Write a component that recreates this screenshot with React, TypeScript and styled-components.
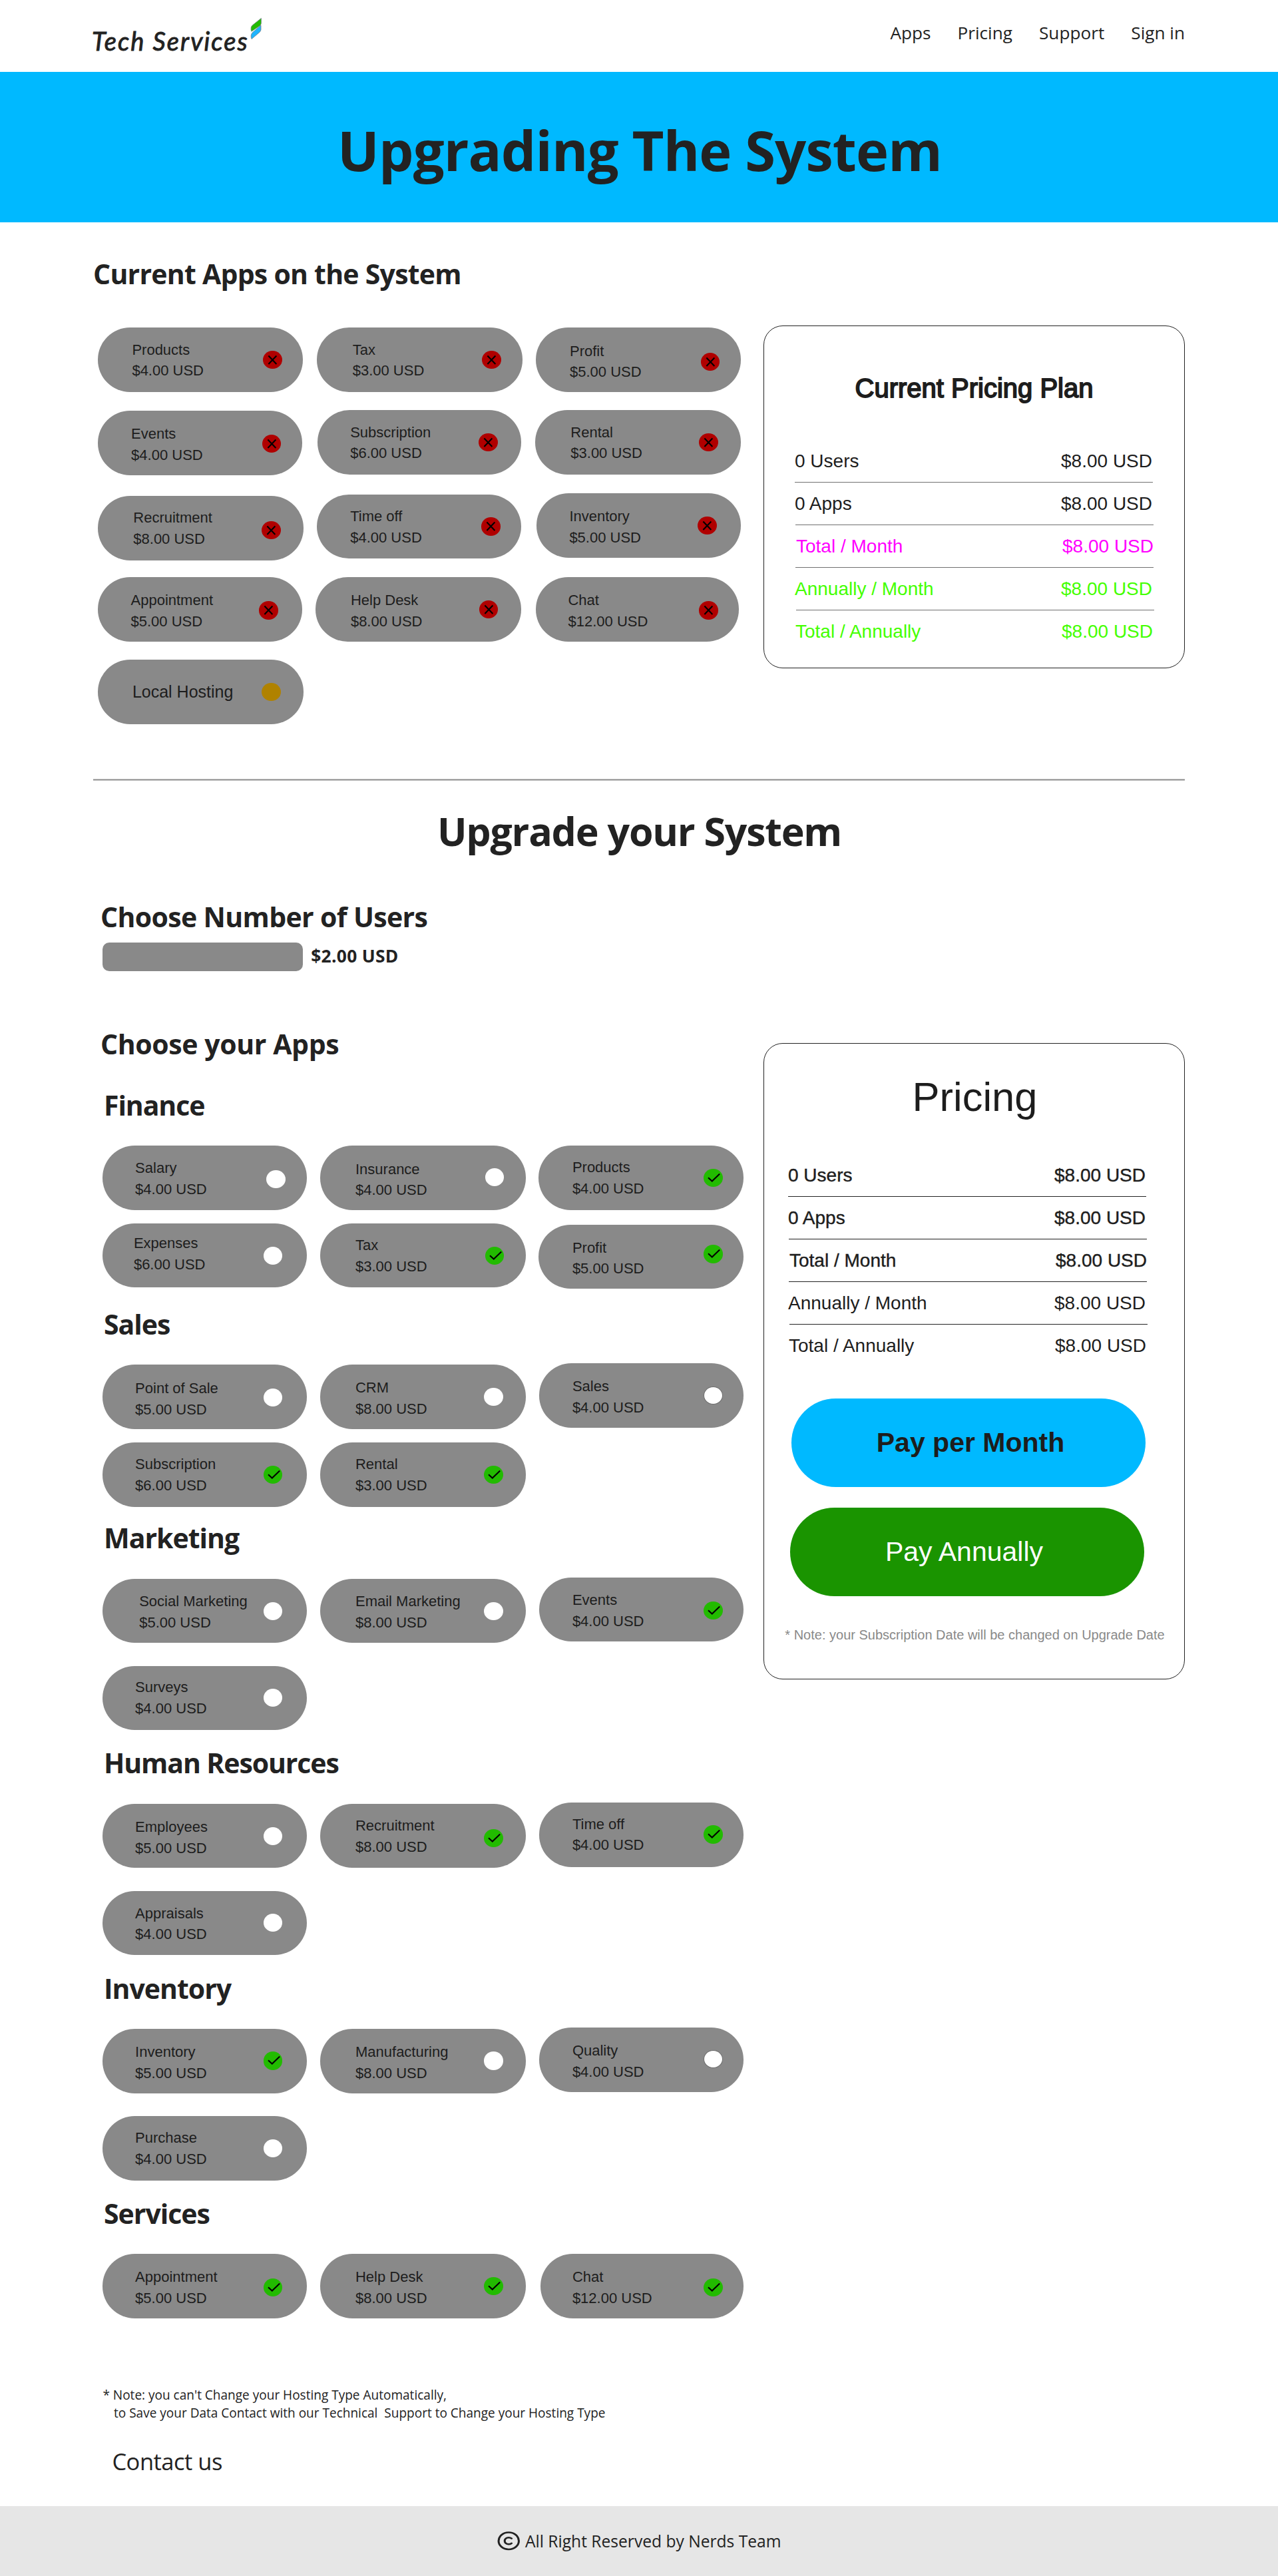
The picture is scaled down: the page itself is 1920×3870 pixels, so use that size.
import React from "react";
import styled, { createGlobalStyle } from "styled-components";
import { Copyright } from "lucide-react";

const UI = `"Open Sans", "Noto Sans", sans-serif`;
const ARIAL = `"Liberation Sans", Arial, sans-serif`;
const INK = "#222222";

const GlobalStyle = createGlobalStyle`
  *, *::before, *::after { box-sizing: border-box; }
  body { margin: 0; background: #ffffff; color: ${INK}; font-family: ${UI}; }
  h1, h2, h3, p { margin: 0; }
`;

const Page = styled.div`
  width: 1920px;
  min-height: 3870px;
  display: flex;
  flex-direction: column;
`;

/* ---------- header ---------- */

const Header = styled.header`
  height: 108px;
  padding: 0 140px 0 138px;
  display: flex;
  justify-content: space-between;
  align-items: flex-start;
`;

const Logo = styled.a`
  display: flex;
  align-items: flex-start;
  color: ${INK};
`;

const LogoText = styled.span`
  margin-top: 39px;
  font: italic 400 38px/44px Lato, sans-serif;
  letter-spacing: 2.1px;
  -webkit-text-stroke: 0.9px ${INK};
`;

const Leaf = styled.svg`
  width: 18px;
  height: 34px;
  margin: 26px 0 0 2px;
`;

const Nav = styled.nav`
  display: flex;
  gap: 40px;
  margin-top: 29px;
  font-size: 26.2px;
  line-height: 40px;
`;

const Banner = styled.section`
  height: 226px;
  padding: 7px 0 0 2px;
  display: flex;
  justify-content: center;
  align-items: center;
  background: #00b9ff;
`;

const BannerTitle = styled.h1`
  font-size: 83px;
  line-height: 110px;
  letter-spacing: -0.85px;
`;

/* ---------- headings and layout ---------- */

const Main = styled.main`
  flex: 1;
  padding: 49px 140px 0;
`;

const Heading = styled.h2<{ $track: number }>`
  font-size: 41px;
  line-height: 56px;
  letter-spacing: ${(p) => p.$track}px;
  white-space: nowrap;
`;

const Columns = styled.div`
  display: flex;
  align-items: flex-start;
  justify-content: space-between;
`;

const CurrentColumns = styled(Columns)`
  margin-top: 50px;
`;

const CurrentApps = styled.div`
  padding: 3px 0 0 7px;
`;

const Divider = styled.div`
  height: 3px;
  margin-top: 82px;
  background: #8a8a8a;
  border: solid #c4c4c4;
  border-width: 1px 0;
`;

const UpgradeTitle = styled.h2`
  margin-top: 37px;
  padding-left: 1px;
  text-align: center;
  font-size: 59px;
  line-height: 76px;
  letter-spacing: -1.2px;
`;

const Users = styled.section`
  margin-top: 63px;
  padding-left: 11px;
`;

const UsersField = styled.div`
  display: flex;
  gap: 12px;
  margin: 11px 0 0 2.7px;
`;

const UsersInput = styled.div`
  width: 301.5px;
  height: 43px;
  border-radius: 10px;
  background: #898989;
`;

const UsersPrice = styled.span`
  font-size: 26.4px;
  font-weight: 700;
  line-height: 40px;
  letter-spacing: 0.3px;
`;

const UpgradeColumns = styled(Columns)`
  margin-top: 81px;
`;

const Chooser = styled.section`
  padding-left: 11px;
`;

const Category = styled.section<{ $top: number }>`
  margin-top: ${(p) => p.$top + 0.8}px;
  padding-left: 3px;

  > h2 {
    margin: 0 0 33.4px 2px;
  }
`;

/* ---------- app pills ---------- */

const PillGrid = styled.div<{ $columns: string; $pitch: number }>`
  display: grid;
  grid-template-columns: ${(p) => p.$columns};
  grid-auto-rows: 96.6px;
  row-gap: ${(p) => p.$pitch - 96.6}px;
`;

const PillBox = styled.div<{ $dx: number; $dy: number; $width: number }>`
  display: flex;
  align-items: flex-start;
  width: ${(p) => p.$width}px;
  height: 96.6px;
  margin: ${(p) => p.$dy}px 0 0 ${(p) => p.$dx}px;
  border-radius: 48.3px;
  background: #898989;
  color: #1d1d1d;
  font-family: ${ARIAL};
`;

const PillText = styled.div<{ $left: number; $top: number; $span: number }>`
  flex: none;
  width: ${(p) => p.$span}px;
  padding: ${(p) => p.$top}px 0 0 ${(p) => p.$left}px;
  font-size: 22px;
  line-height: 31.8px;
  white-space: nowrap;
`;

const HostingText = styled(PillText)`
  font-size: 25px;
`;

type Status = "remove" | "on" | "off" | "outlined" | "hosting";

const DOT_FILL: Record<Status, string> = {
  remove: "#b00000",
  on: "#22bb00",
  off: "#ffffff",
  outlined: "#ffffff",
  hosting: "#b08200",
};

const Dot = styled.span<{ $status: Status; $top: number }>`
  flex: none;
  display: flex;
  width: 28.8px;
  height: 27.4px;
  margin-top: ${(p) => p.$top}px;
  border-radius: 50%;
  border: ${(p) => (p.$status === "outlined" ? "1px solid #6c6c6c" : "none")};
  background: ${(p) => DOT_FILL[p.$status]};
`;

const Mark = styled.svg`
  width: 28.8px;
  height: 27.4px;
  fill: none;
  stroke: #000000;
  stroke-width: 2.1;
`;

interface AppItem {
  name: string;
  price?: string;
  status: Status;
  /** left edge of the label inside the pill */
  x: number;
  /** baseline of the name inside the pill */
  base: number;
  /** left edge and vertical centre of the status dot */
  dotX: number;
  dotY: number;
  width: number;
  dx?: number;
  dy?: number;
}

const app = (
  name: string,
  price: number,
  status: Status,
  x: number,
  base: number,
  dotX: number,
  dotY: number,
  width: number,
  dx = 0,
  dy = 0
): AppItem => ({
  name,
  price: `$${price.toFixed(2)} USD`,
  status,
  x,
  base,
  dotX,
  dotY,
  width,
  dx,
  dy,
});

function Pill({ item }: { item: AppItem }) {
  const Text = item.price ? PillText : HostingText;
  const ascent = item.price ? 22.9 : 24.4;
  return (
    <PillBox $dx={item.dx ?? 0} $dy={item.dy ?? 0} $width={item.width}>
      <Text $left={item.x + 0.5} $top={item.base - ascent} $span={item.dotX}>
        <div>{item.name}</div>
        {item.price && <div>{item.price}</div>}
      </Text>
      <Dot $status={item.status} $top={item.dotY - 13.7}>
        {item.status === "remove" && (
          <Mark viewBox="0 0 28.8 27.4">
            <path d="M8.4 7.6 20.4 20M20.4 7.6 8.4 20" />
          </Mark>
        )}
        {item.status === "on" && (
          <Mark viewBox="0 0 28.8 27.4">
            <path d="M7 13.2 12.8 18.6 24.2 7.6" />
          </Mark>
        )}
      </Dot>
    </PillBox>
  );
}

const CURRENT: AppItem[] = [
  app("Products", 4, "remove", 50.9, 40.4, 248, 48.4, 308),
  app("Tax", 3, "remove", 53, 40.4, 248, 48.4, 308.5),
  app("Profit", 5, "remove", 50.8, 42.5, 248, 51.3, 308.5),
  app("Events", 4, "remove", 49.6, 42, 246.7, 49.4, 307, 0, 0.4),
  app("Subscription", 6, "remove", 48.9, 40.4, 242.2, 48.4, 306.7, 0.6, -0.6),
  app("Rental", 3, "remove", 52.8, 40.4, 246.1, 48.4, 309.2, -0.7, -0.6),
  app("Recruitment", 8, "remove", 52.8, 39.9, 246, 51.3, 309.2, 0, 3.4),
  app("Time off", 4, "remove", 49.5, 40.4, 246.7, 48.4, 306.6, 0, 1.2),
  app("Inventory", 5, "remove", 48.9, 42.1, 242.2, 48.2, 307, 1.3, -0.5),
  app("Appointment", 5, "remove", 49, 42, 242.2, 50, 307.3, 0, 0.6),
  app("Help Desk", 8, "remove", 52.1, 42, 245.4, 48.4, 308.5, -1.9, 0.6),
  app("Chat", 12, "remove", 48.3, 42, 245.4, 50, 305.3, 0, 0.6),
  {
    name: "Local Hosting",
    status: "hosting",
    x: 51.4,
    base: 57,
    dotX: 246,
    dotY: 48.4,
    width: 309.2,
  },
];

const CATEGORIES: {
  title: string;
  top: number;
  track: number;
  pitch: number;
  apps: AppItem[];
}[] = [
  {
    title: "Finance",
    top: 35,
    track: -1.1,
    pitch: 117,
    apps: [
      app("Salary", 4, "off", 48.6, 41.3, 246.1, 50.5, 306.6),
      app("Insurance", 4, "off", 52.8, 42.5, 248, 47.6, 309),
      app("Products", 4, "on", 50.2, 40.4, 248, 48.4, 307.8),
      app("Expenses", 6, "off", 46.4, 37, 241.6, 48.4, 306.6),
      app("Tax", 3, "on", 52.8, 40.4, 248, 48.4, 309.3),
      app("Profit", 5, "on", 50.2, 41.7, 248, 44.2, 307.8, 0, 2),
    ],
  },
  {
    title: "Sales",
    top: 25.3,
    track: -1,
    pitch: 117,
    apps: [
      app("Point of Sale", 5, "off", 48.6, 43.4, 241.6, 49.3, 306.6),
      app("CRM", 8, "off", 52.8, 41.7, 246.1, 48.4, 309.3),
      app("Sales", 4, "outlined", 48.9, 42.1, 246.7, 48.4, 306.5, 1.3, -2),
      app("Subscription", 6, "on", 48.6, 40, 241.6, 48.4, 306.6),
      app("Rental", 3, "on", 52.8, 40, 246.1, 48.4, 309.3),
    ],
  },
  {
    title: "Marketing",
    top: 18,
    track: -1,
    pitch: 131.1,
    apps: [
      app("Social Marketing", 5, "off", 54.7, 40.9, 241.6, 48.6, 306.6),
      app("Email Marketing", 8, "off", 52.8, 40.9, 246.1, 48.6, 309.3),
      app("Events", 4, "on", 48.9, 41.6, 246.7, 49.8, 306.5, 1.3, -2),
      app("Surveys", 4, "off", 48.6, 39.5, 241.6, 47.7, 306.6),
    ],
  },
  {
    title: "Human Resources",
    top: 20.1,
    track: -1.1,
    pitch: 131.1,
    apps: [
      app("Employees", 5, "off", 48.6, 42, 241.6, 48.6, 306.6),
      app("Recruitment", 8, "on", 52.8, 40, 246.1, 51.8, 309.3),
      app("Time off", 4, "on", 48.9, 39.6, 246.7, 48.1, 306.5, 1.3, -1.8),
      app("Appraisals", 4, "off", 48.6, 40.8, 241.6, 47.8, 306.6),
    ],
  },
  {
    title: "Inventory",
    top: 20.5,
    track: -1,
    pitch: 131.1,
    apps: [
      app("Inventory", 5, "on", 48.6, 41.6, 241.6, 48.1, 306.6),
      app("Manufacturing", 8, "off", 52.8, 41.6, 246.1, 48.1, 309.3),
      app("Quality", 4, "outlined", 48.9, 42.1, 246.7, 47.4, 306.5, 1.3, -2),
      app("Purchase", 4, "off", 48.6, 39.6, 241.6, 48.1, 306.6),
    ],
  },
  {
    title: "Services",
    top: 20.1,
    track: -1,
    pitch: 131.1,
    apps: [
      app("Appointment", 5, "on", 48.6, 42, 241.6, 50.2, 306.6),
      app("Help Desk", 8, "on", 52.8, 42, 246.1, 48.4, 309.3),
      app("Chat", 12, "on", 47.6, 42, 245.4, 50.2, 305.2, 2.6),
    ],
  },
];

/* ---------- pricing cards ---------- */

const Card = styled.aside`
  flex: none;
  width: 633px;
  border: 1px solid ${INK};
  border-radius: 29px;
  font-family: ${ARIAL};
  color: #1d1d1d;
`;

const CurrentPlan = styled(Card)`
  height: 515px;
  padding: 69px 0 0 46px;
`;

const Pricing = styled(Card)`
  height: 956px;
  margin-top: 27px;
  padding: 44px 0 0 36px;
`;

const PlanTitle = styled.h3`
  margin: 0 0 54px -46px;
  text-align: center;
  font-size: 40px;
  font-weight: 400;
  line-height: 48px;
  -webkit-text-stroke: 1.8px #1d1d1d;
`;

const PricingTitle = styled.h3`
  margin: 0 0 51px -34px;
  text-align: center;
  font-size: 61.5px;
  font-weight: 400;
  line-height: 71px;
`;

const PriceRow = styled.div<{ $shift: number; $color: string; $heavy: boolean }>`
  display: flex;
  justify-content: space-between;
  width: 537px;
  height: 63px;
  margin-left: ${(p) => p.$shift}px;
  padding-top: 16px;
  font-size: 28px;
  line-height: 32px;
  color: ${(p) => p.$color};
  -webkit-text-stroke: ${(p) => (p.$heavy ? `0.4px ${p.$color}` : "0")};
`;

const Rule = styled.div<{ $shift: number; $color: string }>`
  width: 537.5px;
  height: 1px;
  margin-left: ${(p) => p.$shift}px;
  background: ${(p) => p.$color};
`;

interface PriceLine {
  label: string;
  shift: number;
  ruleShift: number;
  color: string;
}

const ROWS: PriceLine[] = [
  { label: "0 Users", shift: 0, ruleShift: 0, color: "#1d1d1d" },
  { label: "0 Apps", shift: 0, ruleShift: 1, color: "#1d1d1d" },
  { label: "Total / Month", shift: 2, ruleShift: 1, color: "#ff00ff" },
  { label: "Annually / Month", shift: 0, ruleShift: 2, color: "#44ff00" },
  { label: "Total / Annually", shift: 1, ruleShift: 0, color: "#44ff00" },
];

function PriceTable({ tinted = false }: { tinted?: boolean }) {
  return (
    <div>
      {ROWS.map((row, i) => (
        <React.Fragment key={row.label}>
          <PriceRow
            $shift={row.shift}
            $color={tinted ? row.color : "#1d1d1d"}
            $heavy={!tinted && i < 3}
          >
            <span>{row.label}</span>
            <span>$8.00 USD</span>
          </PriceRow>
          {i < ROWS.length - 1 && (
            <Rule $shift={row.ruleShift} $color={tinted ? "#707070" : INK} />
          )}
        </React.Fragment>
      ))}
    </div>
  );
}

const PayButton = styled.button`
  display: block;
  width: 532px;
  height: 133px;
  border: 0;
  border-radius: 66.5px;
  font-family: ${ARIAL};
  font-size: 41px;
  line-height: 48px;
`;

const PayMonthly = styled(PayButton)`
  margin: 48px 0 0 5px;
  padding: 0 0 0 6px;
  background: #00b9ff;
  color: #1d1d1d;
  font-weight: 700;
`;

const PayAnnually = styled(PayButton)`
  margin: 31px 0 0 3px;
  padding: 0 9px 0 0;
  background: #1a9400;
  color: #ffffff;
`;

const CardNote = styled.p`
  margin: 46px 0 0 -34px;
  text-align: center;
  font-size: 20px;
  line-height: 24px;
  color: #898989;
`;

/* ---------- bottom ---------- */

const HostingNote = styled.p`
  margin: 102.6px 0 0 14.4px;
  font-size: 19.05px;
  line-height: 27px;
  white-space: pre;
`;

const NoteContinuation = styled.span`
  display: block;
  padding-left: 16.6px;
`;

const Contact = styled.p`
  margin: 34.4px 0 0 28.4px;
  font-size: 34.5px;
  line-height: 48px;
  letter-spacing: -0.5px;
`;

const Footer = styled.footer`
  height: 105px;
  display: flex;
  justify-content: center;
  align-items: center;
  gap: 6px;
  background: #e6e6e6;
  font-size: 24.6px;
  line-height: 36px;
`;

const CopyrightMark = styled(Copyright)`
  width: 36.5px;
  height: 30.5px;
`;

const FooterText = styled.span`
  padding-top: 1px;
`;

export default function App() {
  return (
    <Page>
      <GlobalStyle />
      <Header>
        <Logo>
          <LogoText>Tech Services</LogoText>
          <Leaf viewBox="0 0 18 34" stroke="#6f7f86" strokeWidth="0.8">
            <path
              fill="#22bb00"
              d="M16.4 1.4V8.6Q16.4 11 14.4 12.8L1.8 21.2Q.8 19 1.2 15.6Q1.5 13.6 3.4 11.8Z"
            />
            <path
              fill="#1fb4ff"
              d="M16 12V18.6Q15.8 20.6 14 22.4L2 32.6Q1 30.6 1.2 27.4Q1.4 25 3.4 22.8Z"
            />
          </Leaf>
        </Logo>
        <Nav>
          <span>Apps</span>
          <span>Pricing</span>
          <span>Support</span>
          <span>Sign in</span>
        </Nav>
      </Header>

      <Banner>
        <BannerTitle>Upgrading The System</BannerTitle>
      </Banner>

      <Main>
        <Heading $track={-0.75}>Current Apps on the System</Heading>
        <CurrentColumns>
          <CurrentApps>
            <PillGrid $columns="329.2px 328.5px 309px" $pitch={124.8}>
              {CURRENT.map((item) => (
                <Pill key={item.name} item={item} />
              ))}
            </PillGrid>
          </CurrentApps>
          <CurrentPlan>
            <PlanTitle>Current Pricing Plan</PlanTitle>
            <PriceTable tinted />
          </CurrentPlan>
        </CurrentColumns>

        <Divider />
        <UpgradeTitle>Upgrade your System</UpgradeTitle>

        <Users>
          <Heading $track={-0.65}>Choose Number of Users</Heading>
          <UsersField>
            <UsersInput />
            <UsersPrice>$2.00 USD</UsersPrice>
          </UsersField>
        </Users>

        <UpgradeColumns>
          <Chooser>
            <Heading $track={-0.4}>Choose your Apps</Heading>
            {CATEGORIES.map((category) => (
              <Category key={category.title} $top={category.top}>
                <Heading $track={category.track}>{category.title}</Heading>
                <PillGrid
                  $columns="326.7px 328.5px 308px"
                  $pitch={category.pitch}
                >
                  {category.apps.map((item) => (
                    <Pill key={item.name} item={item} />
                  ))}
                </PillGrid>
              </Category>
            ))}
          </Chooser>
          <Pricing>
            <PricingTitle>Pricing</PricingTitle>
            <PriceTable />
            <PayMonthly>Pay per Month</PayMonthly>
            <PayAnnually>Pay Annually</PayAnnually>
            <CardNote>
              * Note: your Subscription Date will be changed on Upgrade Date
            </CardNote>
          </Pricing>
        </UpgradeColumns>

        <HostingNote>
          * Note: you can't Change your Hosting Type Automatically,
          <NoteContinuation>
            {"to Save your Data Contact with our Technical  Support to Change your Hosting Type"}
          </NoteContinuation>
        </HostingNote>
        <Contact>Contact us</Contact>
      </Main>

      <Footer>
        <CopyrightMark strokeWidth={2} preserveAspectRatio="none" />
        <FooterText>All Right Reserved by Nerds Team</FooterText>
      </Footer>
    </Page>
  );
}
